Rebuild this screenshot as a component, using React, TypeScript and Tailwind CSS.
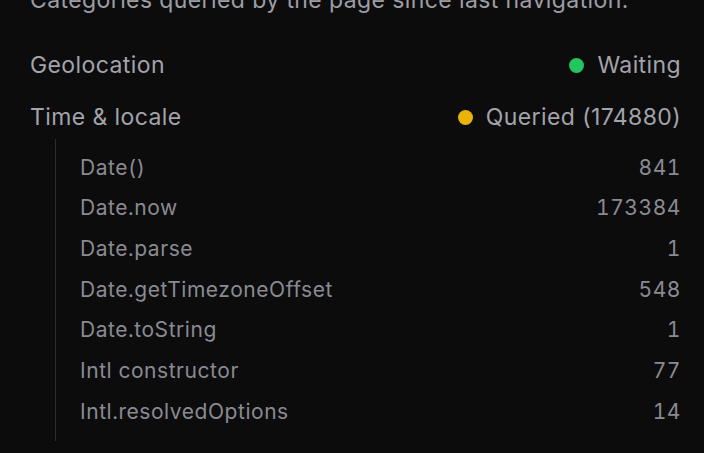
import React from "react";

const sub: [string, string][] = [
  ["Date()", "841"],
  ["Date.now", "173384"],
  ["Date.parse", "1"],
  ["Date.getTimezoneOffset", "548"],
  ["Date.toString", "1"],
  ["Intl constructor", "77"],
  ["Intl.resolvedOptions", "14"],
];

export default function App() {
  return (
    <div
      className="w-[704px] h-[453px] overflow-hidden bg-[#0c0c0d] pl-[30px] pr-[23px]"
      style={{ fontFamily: "Inter, 'Noto Sans', sans-serif" }}
    >
      <p className="-mt-[15px] h-[30px] leading-[30px] text-[23px] tracking-[0.4px] text-[#9d9da5] whitespace-nowrap">
        Categories queried by the page since last navigation.
      </p>
      <div className="mt-[24px]">
        <div className="flex h-[52px] items-center justify-between text-[23px] tracking-[0.4px] text-[#a3a3ab]">
          <span>Geolocation</span>
          <span className="flex items-center gap-[13px]">
            <span className="w-[15px] h-[15px] rounded-full bg-[#22c55e]" />
            <span>Waiting</span>
          </span>
        </div>
        <div className="flex h-[52px] items-center justify-between text-[23px] tracking-[0.4px] text-[#a3a3ab]">
          <span>Time &amp; locale</span>
          <span className="flex items-center gap-[13px]">
            <span className="w-[15px] h-[15px] rounded-full bg-[#eab308]" />
            <span>Queried (174880)</span>
          </span>
        </div>
        <div className="-mt-[4px] ml-[25px] border-l border-[#2c2c30] pl-[24px] pt-[8px] pb-[9px]">
          {sub.map(([k, v]) => (
            <div
              key={k}
              className="flex h-[40.67px] items-center justify-between text-[21px] tracking-[0.55px] text-[#8a8a92] tabular-nums"
            >
              <span>{k}</span>
              <span>{v}</span>
            </div>
          ))}
        </div>
      </div>
    </div>
  );
}
